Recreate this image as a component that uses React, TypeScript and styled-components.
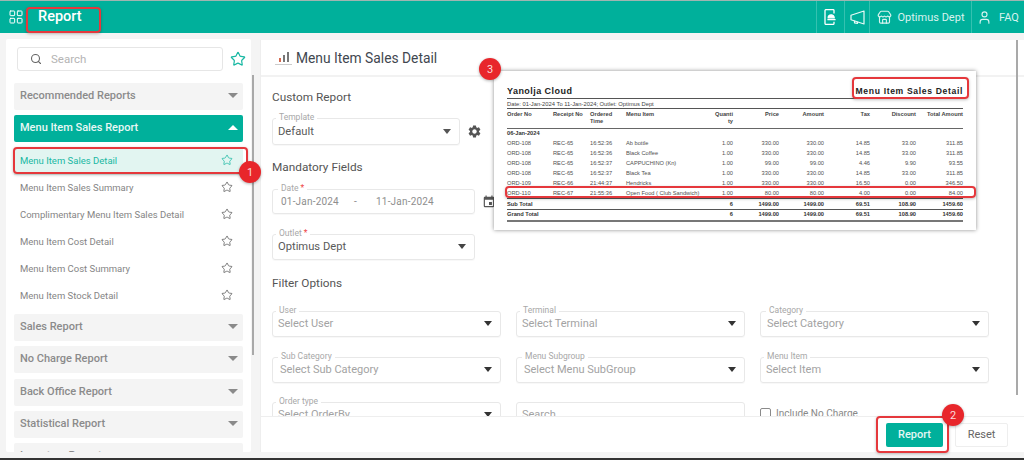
import React from "react";
import styled, { createGlobalStyle } from "styled-components";
import { LayoutGrid, Store, User, Search, Star } from "lucide-react";
import { MdSettings, MdEvent } from "react-icons/md";

const Global = createGlobalStyle`
  html, body { margin: 0; padding: 0; background: #f4f4f4; }
  * { box-sizing: border-box; }
`;
const Page = styled.div`
  width: 1024px; height: 460px; overflow: hidden; position: relative;
  display: flex; flex-direction: column; background: #f4f4f4;
  font-family: Roboto, "Noto Sans", sans-serif; color: #555;
`;
const Header = styled.header`
  height: 33px; flex: none; display: flex; align-items: center; background: #00b09b;
  border-top: 1px solid #9fb5b1; color: #fff; padding-left: 8px;
`;
const AppTitle = styled.div`font-size: 14.5px; font-weight: 500; margin-left: 14px; flex: 1; padding-bottom: 1px;`;
const HeadCell = styled.div<{ $w: number; $gap?: number }>`
  width: ${p => p.$w}px; height: 100%; display: flex; align-items: center; justify-content: center; gap: ${p => p.$gap ?? 6}px;
  border-left: 1px solid #35c1b0; font-size: 11px; color: #d8f3ef;
`;
const Body = styled.div`flex: 1; min-height: 0; display: flex; padding: 6px 0 6px 6px; gap: 9px;`;
const Sidebar = styled.aside`
  width: 245px; flex: none; background: #fff; border-radius: 2px; overflow: hidden;
  padding: 8px 8px 0 8px;
`;
const SearchRow = styled.div`display: flex; align-items: center; gap: 7px; margin: 0 -8px 12px 3px;`;
const SearchBox = styled.div`
  width: 206px; flex: none; height: 24px; border: 1px solid #e6e6e6; border-radius: 3px; display: flex; align-items: center;
  padding-left: 12px; gap: 9px; font-size: 11.5px; color: #b4b4b4;
`;
const SideScroll = styled.span`
  position: absolute; left: 252px; top: 75px; width: 2px; height: 280px; background: #a9a9a9;
`;
const Group = styled.div<{ $open?: boolean }>`
  width: 229px; height: 27px; margin-bottom: 5.4px; border-radius: 2px; display: flex; align-items: center;
  justify-content: space-between; padding: 0 4px 2px 6px; font-size: 11px; font-weight: 500;
  background: ${p => (p.$open ? "#00b09b" : "#f4f4f4")}; color: ${p => (p.$open ? "#e8f8f5" : "#8b8b8b")};
`;
const Caret = styled.span<{ $up?: boolean; $color?: string }>`
  width: 0; height: 0; display: inline-block; flex: none;
  border-left: 4px solid transparent; border-right: 4px solid transparent;
  ${p => (p.$up ? "border-bottom" : "border-top")}: 5px solid ${p => p.$color ?? "#8a8a8a"};
`;
const GroupCaret = styled.span`margin-right: 1px; display: flex;`;
const GroupCaretBig = styled(Caret)`border-left-width: 5px; border-right-width: 5px;`;
const Items = styled.div`margin: 0 0 4px;`;
const Item = styled.div<{ $active?: boolean }>`
  width: 229px; height: 27px; display: flex; align-items: center; justify-content: space-between;
  padding: 0 10px 2px 6px; font-size: 9.5px;
  background: ${p => (p.$active ? "#e2f5f1" : "transparent")}; color: ${p => (p.$active ? "#19b8a3" : "#858585")};
`;
const Main = styled.main`
  flex: 1; min-width: 0; background: #fff; display: flex; flex-direction: column;
  position: relative; border-left: 1px solid #eee; margin-top: 1px;
`;
const TitleBar = styled.div`
  height: 37px; flex: none; border-bottom: 2px solid #f2f2f2; display: flex; align-items: center;
  padding-left: 14px; gap: 4px; font-size: 13.8px; color: #3f4750;
`;
const Content = styled.div`flex: 1; min-height: 0; overflow: hidden; padding: 0 0 0 11px;`;
const Heading = styled.div`font-size: 11.8px; color: #555; height: 16px; line-height: 16px;`;
const FieldRow = styled.div`display: flex; align-items: center; gap: 7px;`;
const Field = styled.div<{ $w?: number; $h?: number; $light?: boolean; $pad?: number }>`
  width: ${p => (p.$w ? `${p.$w}px` : "100%")}; height: ${p => p.$h ?? 26}px; border: 1px solid #e8e8e8; border-radius: 3px; position: relative;
  display: flex; align-items: center; justify-content: space-between; padding: 0 8px 1px ${p => p.$pad ?? 5}px;
  font-size: ${p => (p.$light ? 11 : 11.2)}px; color: ${p => (p.$light ? "#a3a3a3" : "#5a5a5a")};
  box-shadow: 0 1px 1px rgba(0,0,0,.03);
`;
const Legend = styled.span<{ $x?: number }>`
  position: absolute; left: ${p => p.$x ?? 3}px; top: -7px; padding: 0 3px; background: #fff; font-size: 8.5px; line-height: 10px; color: #a8a8a8;
`;
const Req = styled.b`color: #e44; font-weight: 400; margin-left: 2px;`;
const DateText = styled.span<{ $w: number }>`width: ${p => p.$w}px; color: #8e8e8e; font-size: 10px; letter-spacing: .2px;`;
const DateInner = styled.div`display: flex; align-items: center; padding-left: 3px;`;
const Stack = styled.div<{ $top: number }>`margin-top: ${p => p.$top}px;`;
const FilterGrid = styled.div`
  display: grid; grid-template-columns: 229px 229px 229px; column-gap: 15px; row-gap: 19.5px;
`;
const CheckWrap = styled.div`display: flex; align-items: center; gap: 5px; font-size: 10px; color: #888; height: 26px; align-self: start; margin-top: -2px;`;
const Check = styled.span`width: 11px; height: 11px; border: 1px solid #8a8a8a; border-radius: 2px;`;
const Footer = styled.div`
  height: 36px; flex: none; border-top: 1px solid #eee; background: #fff; display: flex; align-items: center;
  justify-content: flex-end; gap: 12px; padding: 0 16px 0 0;
`;
const PrimaryBtn = styled.button`
  width: 57px; height: 24px; border: 0; border-radius: 2px; background: #00b09b; color: #e4f7f4;
  font: 500 11px Roboto, sans-serif; padding: 0;
`;
const GhostBtn = styled.button`
  width: 53px; height: 24px; border: 1px solid #eee; border-radius: 2px; background: #fff; color: #666;
  font: 400 11px Roboto, sans-serif; padding: 0;
`;
const MainScroll = styled.span`position: absolute; right: 6px; top: 0; width: 2px; height: 355px; background: #a9a9a9;`;
const BottomStrip = styled.div`height: 2px; flex: none; background: #333;`;

const Report = styled.section`
  position: absolute; left: 494px; top: 71px; width: 482px; height: 159px; background: #fff;
  box-shadow: 0 0 4px rgba(0,0,0,.45); padding: 13px 13px 0 13px; font-family: "Liberation Sans", Arial, sans-serif;
  color: #3a3a3a;
`;
const ReportHead = styled.div`
  display: flex; justify-content: space-between; align-items: center; height: 13px;
  font-weight: 700; font-size: 9px; letter-spacing: .45px; color: #222;
`;
const RTitle = styled.span`font-size: 8.6px; letter-spacing: .65px;`;
const RDate = styled.div`
  height: 11px; margin-top: 1px; border-top: 1px solid #555; border-bottom: 1px solid #555; font-size: 5.8px; line-height: 10px; color: #444;
`;
const Table = styled.table`
  width: 456px; table-layout: fixed; border-collapse: collapse; font-size: 5.7px; line-height: 7px;
  border-bottom: 2px solid #777;
`;
const Th = styled.th<{ $r?: boolean }>`
  text-align: ${p => (p.$r ? "right" : "left")}; vertical-align: top; padding: 2px 0 3px; height: 18px;
  font-weight: 700; border-bottom: 1px solid #666; color: #444;
`;
const Td = styled.td<{ $r?: boolean; $b?: boolean; $line?: boolean }>`
  text-align: ${p => (p.$r ? "right" : "left")}; padding: 0; height: ${p => (p.$line ? 11 : 10)}px; color: ${p => (p.$b ? "#333" : "#505050")};
  font-weight: ${p => (p.$b ? 700 : 400)}; white-space: nowrap;
  ${p => (p.$line ? "border-top: 1px solid #555;" : "")}
`;
const Callout = styled.div<{ $x: number; $y: number; $w: number; $h: number }>`
  position: absolute; left: ${p => p.$x}px; top: ${p => p.$y}px; width: ${p => p.$w}px; height: ${p => p.$h}px;
  border: 2px solid #e5383c; border-radius: 4px; box-shadow: 0 1px 3px rgba(0,0,0,.25);
`;
const Badge = styled.div<{ $x: number; $y: number }>`
  position: absolute; left: ${p => p.$x - 11}px; top: ${p => p.$y - 11}px; width: 22px; height: 22px; border-radius: 50%;
  background: #e8262b; color: #fbdcdc; font-size: 11px; display: flex; align-items: center; justify-content: center;
  box-shadow: 0 1px 3px rgba(0,0,0,.3);
`;

const PhoneBell = () => (
  <svg width="13" height="16" viewBox="0 0 13 16" fill="none" stroke="#fff" strokeWidth="1.3">
    <path d="M10 4.5V1.6a1 1 0 0 0-1-1H2a1 1 0 0 0-1 1v12.8a1 1 0 0 0 1 1h7a1 1 0 0 0 1-1v-1.6" />
    <path d="M4.2 8.8a3 3 0 0 1 6 0z M3.4 10.6h8.2" fill="#fff" />
  </svg>
);
const Horn = () => (
  <svg width="15" height="15" viewBox="0 0 15 15" fill="none" stroke="#eafaf7" strokeWidth="1.2" strokeLinejoin="round">
    <path d="M1 5.2 14 1v13L1 9.8z" />
    <path d="M4.5 10.8v2l3 .6v-1.6" />
  </svg>
);
const Bars = () => (
  <svg width="17" height="16" viewBox="0 0 17 16">
    <rect x="4" y="8" width="2" height="4" fill="#d66a4f" />
    <rect x="8" y="5" width="2" height="7" fill="#777" />
    <rect x="12" y="2" width="2" height="10" fill="#777" />
    <rect x="0" y="14" width="17" height="1" fill="#ccc" />
  </svg>
);

const items = ["Menu Item Sales Detail", "Menu Item Sales Summary", "Complimentary Menu Item Sales Detail", "Menu Item Cost Detail", "Menu Item Cost Summary", "Menu Item Stock Detail"];
const rows = [
  ["ORD-108", "REC-65", "16:52:36", "Ab bottle", "1.00", "330.00", "330.00", "14.85", "33.00", "311.85"],
  ["ORD-108", "REC-65", "16:52:36", "Black Coffee", "1.00", "330.00", "330.00", "14.85", "33.00", "311.85"],
  ["ORD-108", "REC-65", "16:52:37", "CAPPUCHINO (Kn)", "1.00", "99.00", "99.00", "4.46", "9.90", "93.55"],
  ["ORD-108", "REC-65", "16:52:37", "Black Tea", "1.00", "330.00", "330.00", "14.85", "33.00", "311.85"],
  ["ORD-109", "REC-66", "21:44:37", "Hendricks", "1.00", "330.00", "330.00", "16.50", "0.00", "346.50"],
  ["ORD-110", "REC-67", "21:55:36", "Open Food ( Club Sandwich)", "1.00", "80.00", "80.00", "4.00", "0.00", "84.00"],
];
const cols = [46, 37, 36, 88, 19, 46, 45, 46, 46, 47];
const filters: [string, string, number, number][] = [
  ["User", "Select User", 3, 5], ["Terminal", "Select Terminal", 3, 5], ["Category", "Select Category", 5, 6],
  ["Sub Category", "Select Sub Category", 5, 7], ["Menu Subgroup", "Select Menu SubGroup", 5, 7], ["Menu Item", "Select Item", 3, 5],
];

const Total = ({ label, q, v }: { label: string; q: string; v: string[] }) => (
  <tr>
    <Td $b $line colSpan={4}>{label}</Td>
    <Td $b $line $r>{q}</Td>
    {v.map((x, i) => <Td key={i} $b $line $r>{x}</Td>)}
  </tr>
);

export default function App() {
  return (
    <Page>
      <Global />
      <Header>
        <LayoutGrid size={16} strokeWidth={1.5} />
        <AppTitle>Report</AppTitle>
        <HeadCell $w={28}><PhoneBell /></HeadCell>
        <HeadCell $w={25}><Horn /></HeadCell>
        <HeadCell $w={102}><Store size={15} strokeWidth={1.8} />Optimus Dept</HeadCell>
        <HeadCell $w={53} $gap={7}><User size={15} strokeWidth={1.8} />FAQ</HeadCell>
      </Header>
      <Body>
        <Sidebar>
          <SearchRow>
            <SearchBox><Search size={12} color="#666" strokeWidth={2.2} />Search</SearchBox>
            <Star size={16} color="#19b8a3" strokeWidth={1.8} />
          </SearchRow>
          <Group>Recommended Reports<GroupCaret><GroupCaretBig /></GroupCaret></Group>
          <Group $open>Menu Item Sales Report<GroupCaret><GroupCaretBig $up $color="#fff" /></GroupCaret></Group>
          <Items>
            {items.map((t, i) => (
              <Item key={t} $active={i === 0}>{t}<Star size={12} strokeWidth={1.5} color={i === 0 ? "#19b8a3" : "#555"} /></Item>
            ))}
          </Items>
          {["Sales Report", "No Charge Report", "Back Office Report", "Statistical Report", "Inventory Report"].map(t => (
            <Group key={t}>{t}<GroupCaret><GroupCaretBig /></GroupCaret></Group>
          ))}
        </Sidebar>
        <Main>
          <TitleBar><Bars />Menu Item Sales Detail</TitleBar>
          <Content>
            <Stack $top={12}><Heading>Custom Report</Heading></Stack>
            <Stack $top={13}>
              <FieldRow>
                <Field $w={188} $h={27}><Legend>Template</Legend>Default<Caret $color="#555" /></Field>
                <MdSettings size={15} color="#555" />
              </FieldRow>
            </Stack>
            <Stack $top={14}><Heading>Mandatory Fields</Heading></Stack>
            <Stack $top={14}>
              <FieldRow>
                <Field $w={203} $h={25}>
                  <Legend $x={5}>Date<Req>*</Req></Legend>
                  <DateInner><DateText $w={73}>01-Jan-2024</DateText><DateText $w={22}>-</DateText><DateText $w={70}>11-Jan-2024</DateText></DateInner>
                </Field>
                <MdEvent size={14} color="#555" />
              </FieldRow>
            </Stack>
            <Stack $top={20}>
              <Field $w={203} $h={26}><Legend>Outlet<Req>*</Req></Legend>Optimus Dept<Caret $color="#444" /></Field>
            </Stack>
            <Stack $top={15}><Heading>Filter Options</Heading></Stack>
            <Stack $top={20}>
              <FilterGrid>
                {filters.map(([l, p, lx, pad]) => (
                  <Field key={l} $light $pad={pad}>
                    <Legend $x={lx}>{l}</Legend>{p}<Caret $color="#333" />
                  </Field>
                ))}
                <Field $light><Legend>Order type</Legend>Select OrderBy<Caret $color="#333" /></Field>
                <Field $light>Search</Field>
                <CheckWrap><Check />Include No Charge</CheckWrap>
              </FilterGrid>
            </Stack>
          </Content>
          <Footer>
            <PrimaryBtn>Report</PrimaryBtn>
            <GhostBtn>Reset</GhostBtn>
          </Footer>
          <MainScroll />
        </Main>
      </Body>
      <BottomStrip />

      <SideScroll />
      <Report>
        <ReportHead><span>Yanolja Cloud</span><RTitle>Menu Item Sales Detail</RTitle></ReportHead>
        <RDate>Date: 01-Jan-2024 To 11-Jan-2024; Outlet: Optimus Dept</RDate>
        <Table>
          <colgroup>{cols.map((w, i) => <col key={i} width={w} />)}</colgroup>
          <thead>
            <tr>
              <Th>Order No</Th><Th>Receipt No</Th><Th>Ordered Time</Th><Th>Menu Item</Th><Th $r>Quanti ty</Th>
              <Th $r>Price</Th><Th $r>Amount</Th><Th $r>Tax</Th><Th $r>Discount</Th><Th $r>Total Amount</Th>
            </tr>
          </thead>
          <tbody>
            <tr><Td $b colSpan={10}>06-Jan-2024</Td></tr>
            {rows.map((r, i) => (
              <tr key={i}>{r.map((c, j) => <Td key={j} $r={j > 3}>{c}</Td>)}</tr>
            ))}
            <Total label="Sub Total" q="6" v={["1499.00", "1499.00", "69.51", "108.90", "1459.60"]} />
            <Total label="Grand Total" q="6" v={["1499.00", "1499.00", "69.51", "108.90", "1459.60"]} />
          </tbody>
        </Table>
      </Report>

      <Callout $x={26} $y={7} $w={75} $h={26} />
      <Callout $x={13} $y={147} $w={235} $h={27} />
      <Callout $x={852} $y={77} $w={117} $h={22} />
      <Callout $x={505} $y={186} $w={471} $h={12} />
      <Callout $x={876} $y={416} $w={73} $h={37} />
      <Badge $x={250} $y={172}>1</Badge>
      <Badge $x={953} $y={415}>2</Badge>
      <Badge $x={490} $y={69}>3</Badge>
    </Page>
  );
}
